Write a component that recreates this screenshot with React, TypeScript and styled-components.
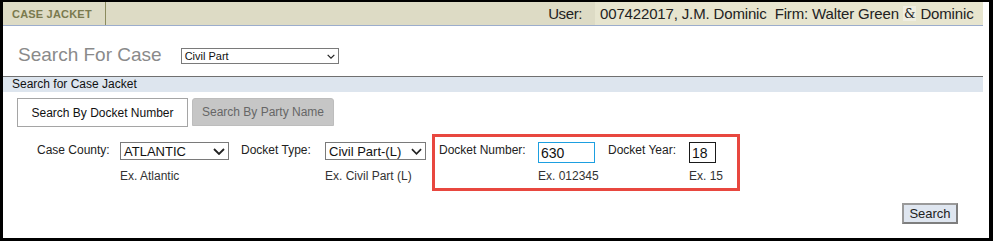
import styled, { createGlobalStyle } from 'styled-components';

const GlobalStyle = createGlobalStyle`
  html, body {
    margin: 0;
    padding: 0;
    background: #fff;
  }
  body {
    font-family: "Liberation Sans", Arial, sans-serif;
    color: #222;
  }
`;

const Frame = styled.div`
  box-sizing: border-box;
  width: 993px;
  height: 241px;
  border-style: solid;
  border-color: #000;
  border-width: 2px 4px 3px 3px;
  padding-right: 6px;
  background: #fff;
  display: flex;
  flex-direction: column;
`;

const Header = styled.div`
  display: flex;
  align-items: stretch;
  height: 23px;
  background: #dddbc5;
  border-bottom: 1px solid #9cadcc;
`;

const HeaderTab = styled.div`
  box-sizing: border-box;
  width: 103px;
  padding-left: 9px;
  display: flex;
  align-items: center;
  border-right: 1px solid #8b8b5e;
  font-size: 11px;
  font-weight: bold;
  color: #7a7a4e;
  letter-spacing: 0.2px;
`;

const Spacer = styled.div`
  flex: 1;
`;

const UserLabel = styled.div`
  display: flex;
  align-items: center;
  padding-right: 13px;
  font-size: 15px;
  letter-spacing: -0.4px;
  color: #222;
`;

const UserValue = styled.div`
  box-sizing: border-box;
  width: 388px;
  padding-left: 5px;
  display: flex;
  align-items: center;
  background: #e7e5cf;
  font-family: "Liberation Sans", Arial, sans-serif;
  font-size: 15px;
  letter-spacing: -0.15px;
  color: #222;
  white-space: pre;
  overflow: hidden;
`;

const Amp = styled.span`
  background: #efeee2;
  font-family: "DejaVu Serif", serif;
  font-size: 13px;
  padding: 0 1px;
`;

const TitleRow = styled.div`
  height: 50px;
  display: flex;
  align-items: flex-start;
  padding: 17px 0 0 15px;
  box-sizing: border-box;
`;

const Title = styled.h1`
  margin: 0;
  font-size: 19px;
  line-height: 24px;
  font-weight: normal;
  color: #8a8a8a;
`;

const FakeSelect = styled.div<{ $width: number; $height: number; $font: number }>`
  box-sizing: border-box;
  width: ${p => p.$width}px;
  height: ${p => p.$height}px;
  border: 1px solid #7a7a7a;
  background: #fff;
  display: flex;
  align-items: center;
  justify-content: space-between;
  padding: 0 3px 0 3px;
  font-size: ${p => p.$font}px;
  color: #111;
`;

const TitleSelect = styled(FakeSelect)`
  margin: 5px 0 0 19px;
`;

const Band = styled.div`
  border-top: 1px solid #707070;
  height: 15px;
  line-height: 15px;
  background: #dde5ee;
  padding-left: 9px;
  font-size: 12px;
  color: #111;
`;

const Tabs = styled.div`
  display: flex;
  gap: 4px;
  margin-top: 6px;
  padding-left: 14px;
`;

const Tab = styled.div<{ $active?: boolean }>`
  box-sizing: border-box;
  width: ${p => (p.$active ? 171 : 142)}px;
  height: ${p => (p.$active ? 29 : 28)}px;
  display: flex;
  align-items: center;
  justify-content: center;
  font-size: 12px;
  border: 1px solid ${p => (p.$active ? '#a5a5a5' : '#bdbdbd')};
  border-radius: ${p => (p.$active ? '0' : '3px 3px 0 0')};
  background: ${p => (p.$active ? '#fff' : '#c6c6c6')};
  color: ${p => (p.$active ? '#111' : '#666')};
`;

const FormRow = styled.div`
  display: flex;
  align-items: flex-start;
  margin-top: 7px;
  padding-left: 34px;
`;

const Field = styled.div<{ $gap?: number }>`
  display: flex;
  align-items: flex-start;
  padding-top: 8px;
  margin-left: ${p => p.$gap ?? 0}px;
`;

const Boxed = styled.div`
  display: flex;
  align-items: flex-start;
  margin-left: 6px;
  border: 3px solid #e8473f;
  padding: 5px 21px 5px 4px;
`;

const BoxedField = styled.div<{ $gap?: number }>`
  display: flex;
  align-items: flex-start;
  margin-left: ${p => p.$gap ?? 0}px;
`;

const Label = styled.div<{ $width: number }>`
  width: ${p => p.$width}px;
  font-size: 12px;
  line-height: 14px;
  padding-top: 1px;
  color: #222;
`;

const ControlColumn = styled.div<{ $width: number }>`
  display: grid;
  grid-template-columns: ${p => p.$width}px;
  grid-template-rows: 21px auto;
  row-gap: 6px;
  align-items: start;
`;

const Hint = styled.div`
  font-size: 12px;
  line-height: 14px;
  color: #333;
  white-space: nowrap;
`;

const TextInput = styled.input<{ $width: number; $focused?: boolean }>`
  box-sizing: border-box;
  width: ${p => p.$width}px;
  height: 21px;
  margin: 0;
  padding: 1px 2px 0;
  border: 1px solid ${p => (p.$focused ? '#1d9fe0' : '#1a1a1a')};
  outline: none;
  font-family: "Liberation Sans", Arial, sans-serif;
  font-size: 14px;
  color: #111;
  background: #fff;
`;

const ButtonRow = styled.div`
  display: flex;
  justify-content: flex-end;
  margin-top: 12px;
  padding-right: 25px;
`;

const SearchButton = styled.button`
  box-sizing: border-box;
  width: 56px;
  height: 21px;
  padding: 0;
  border: 2px solid #7e7e7e;
  border-top-color: #9a9a9a;
  border-left-color: #9a9a9a;
  background: #dfe6f0;
  font-family: "Liberation Sans", Arial, sans-serif;
  font-size: 13px;
  color: #222;
`;

function Chevron({ size }: { size: number }) {
  const h = Math.round(size * 0.6);
  return (
    <svg width={size} height={h} viewBox="0 0 12 7" fill="none">
      <path d="M1 1 L6 6 L11 1" stroke="#222" strokeWidth="1.8" />
    </svg>
  );
}

function App() {
  return (
    <>
      <GlobalStyle />
      <Frame>
        <Header>
          <HeaderTab>CASE JACKET</HeaderTab>
          <Spacer />
          <UserLabel>User:</UserLabel>
          <UserValue>
            007422017, J.M. Dominic  Firm: Walter Green <Amp>&amp;</Amp> Dominic
          </UserValue>
        </Header>

        <TitleRow>
          <Title>Search For Case</Title>
          <TitleSelect $width={158} $height={16} $font={11}>
            <span>Civil Part</span>
            <Chevron size={8} />
          </TitleSelect>
        </TitleRow>

        <Band>Search for Case Jacket</Band>

        <Tabs>
          <Tab $active>Search By Docket Number</Tab>
          <Tab>Search By Party Name</Tab>
        </Tabs>

        <FormRow>
          <Field>
            <Label $width={83}>Case County:</Label>
            <ControlColumn $width={109}>
              <FakeSelect $width={109} $height={18} $font={13}>
                <span>ATLANTIC</span>
                <Chevron size={12} />
              </FakeSelect>
              <Hint>Ex. Atlantic</Hint>
            </ControlColumn>
          </Field>
          <Field $gap={12}>
            <Label $width={84}>Docket Type:</Label>
            <ControlColumn $width={101}>
              <FakeSelect $width={101} $height={18} $font={13}>
                <span>Civil Part-(L)</span>
                <Chevron size={11} />
              </FakeSelect>
              <Hint>Ex. Civil Part (L)</Hint>
            </ControlColumn>
          </Field>
          <Boxed>
            <BoxedField>
              <Label $width={99}>Docket Number:</Label>
              <ControlColumn $width={57}>
                <TextInput $width={57} $focused defaultValue="630" />
                <Hint>Ex. 012345</Hint>
              </ControlColumn>
            </BoxedField>
            <BoxedField $gap={13}>
              <Label $width={81}>Docket Year:</Label>
              <ControlColumn $width={27}>
                <TextInput $width={27} defaultValue="18" />
                <Hint>Ex. 15</Hint>
              </ControlColumn>
            </BoxedField>
          </Boxed>
        </FormRow>

        <ButtonRow>
          <SearchButton>Search</SearchButton>
        </ButtonRow>
      </Frame>
    </>
  );
}

export default App;
